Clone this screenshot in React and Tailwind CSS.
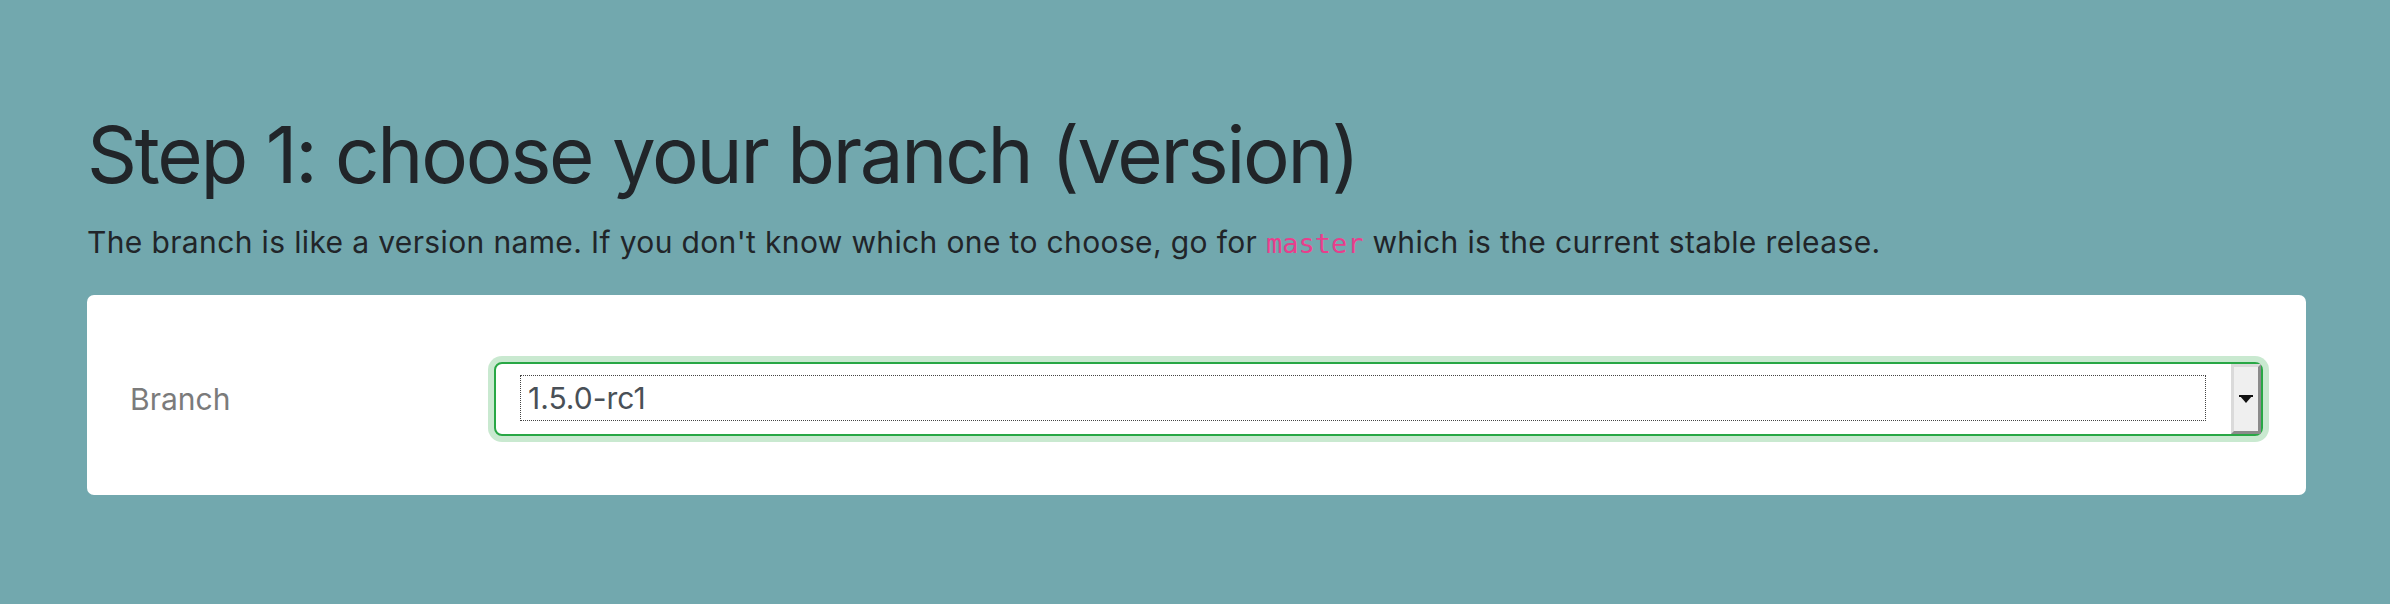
import React from 'react';

const DropArrow = () => (
  <svg width="14" height="8" viewBox="0 0 14 8" className="block">
    <rect x="0" y="0" width="14" height="2" fill="#111" />
    <polygon points="1,1 13,1 7,8" fill="#111" />
  </svg>
);

export default function App() {
  return (
    <div
      className="min-h-[604px] w-full bg-[#72a8ae] pl-[87px] pr-[84px] pt-[108px] text-[#212529]"
      style={{ fontFamily: 'Inter, "Noto Sans", sans-serif' }}
    >
      {/* heading */}
      <h1 className="text-[78px] leading-[94px] font-normal tracking-[-0.029em] whitespace-nowrap">
        Step 1: choose your branch (version)
      </h1>
      <p className="mt-[18px] text-[30px] leading-[44px] tracking-[0.012em] whitespace-nowrap">
        The branch is like a version name. If you don't know which one to choose, go for{' '}
        <code className="text-[27px] tracking-normal text-[#e83e8c]" style={{ fontFamily: '"DejaVu Sans Mono", monospace' }}>
          master
        </code>{' '}
        which is the current stable release.
      </p>

      {/* card */}
      <div className="mt-[29px] rounded-[7px] bg-white px-[43px] pt-[67px] pb-[59px]">
        <div className="flex items-center">
          <label className="w-[364px] shrink-0 text-[30px] text-[#7b7b7b]">Branch</label>
          <div className="flex flex-1 h-[74px] rounded-[8px] border-2 border-[#28a745] bg-white shadow-[0_0_0_6px_rgba(40,167,69,0.25)]">
            <div className="flex-1 pl-[24px] pr-[25px] pt-[11px] pb-[13px]">
              <div className="h-full border border-dotted border-[#444] pl-[7px] flex items-center text-[30px] text-[#495057]">
                1.5.0-rc1
              </div>
            </div>
            <div className="w-[30px] h-full flex items-center justify-center bg-[#efefef] border-[3px] border-t-[#dadada] border-l-[#dadada] border-r-[#8b8b8b] border-b-[#8b8b8b]">
              <DropArrow />
            </div>
          </div>
        </div>
      </div>
    </div>
  );
}
